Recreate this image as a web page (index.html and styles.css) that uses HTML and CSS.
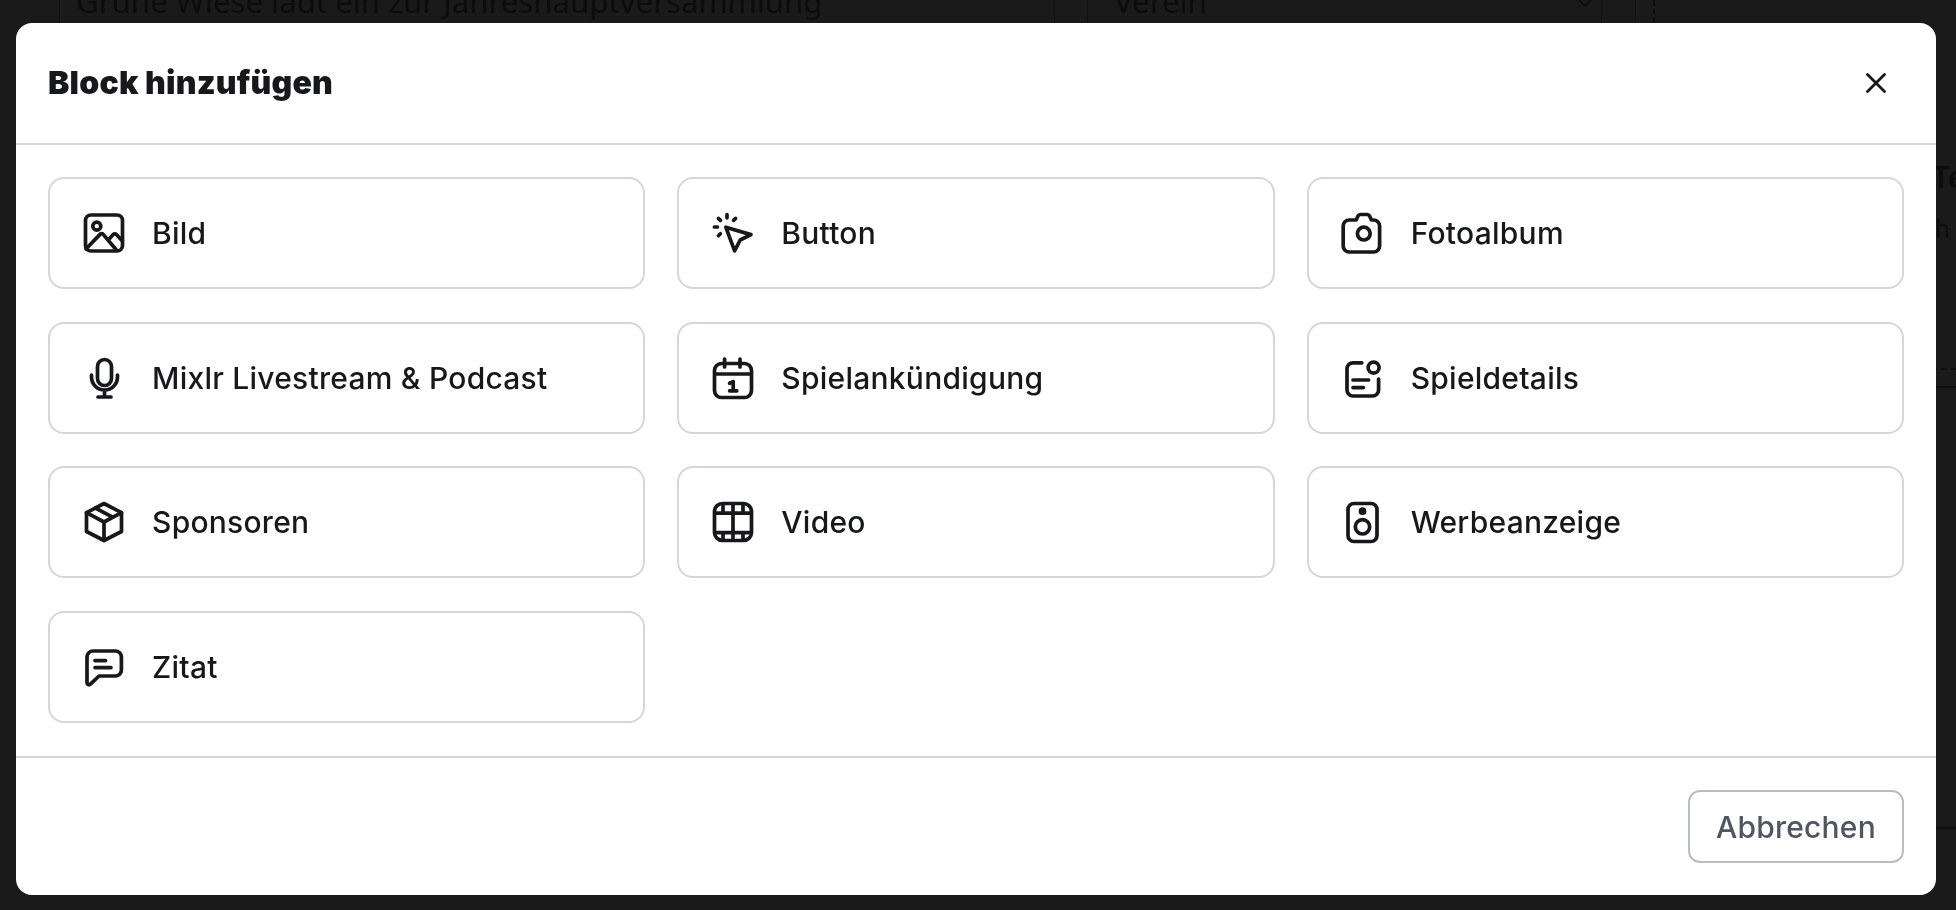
FILE: index.html
```html
<!DOCTYPE html>
<html lang="de">
<head>
<meta charset="utf-8">
<title>Block hinzufügen</title>
<link rel="stylesheet" href="styles.css">
</head>
<body>
<div class="behind">
  <div class="behind-row">
    <div class="cell cell-a"></div>
    <div class="cell cell-b">Grüne Wiese lädt ein zur Jahreshauptversammlung</div>
    <div class="cell cell-c"></div>
    <div class="cell cell-d"><span>Verein</span><svg class="chev" viewBox="0 0 16 10" width="16" height="10"><path d="M1 1l7 7 7-7"/></svg></div>
    <div class="cell cell-e"></div>
    <div class="cell cell-f"></div>
    <div class="cell cell-g">
      <div class="side-title">Te</div>
      <div class="side-text">h</div>
      <div class="side-dash"></div>
      <div class="side-line"></div>
      <div class="side-line side-line-low"></div>
    </div>
  </div>
</div>
<div class="overlay">
  <div class="modal">
    <header class="modal-head">
      <h2 class="modal-title">Block hinzufügen</h2>
      <button class="close" aria-label="Schließen">
        <svg viewBox="0 0 20 20" width="20" height="20"><path d="M1.5 1.5l17 17M18.5 1.5l-17 17"/></svg>
      </button>
    </header>
    <div class="modal-body">
      <div class="block"><svg class="ico" viewBox="0 0 24 24"><rect x="2.75" y="3" width="18.5" height="18" rx="2.75"/><circle cx="8.4" cy="8.6" r="2"/><path d="M3 20l7-7.3a1.1 1.1 0 0 1 1.6 0l6.6 7.8M14 15.6l2.6-2.8a1.1 1.1 0 0 1 1.6 0l3 3.2"/></svg><span class="label">Bild</span></div>
      <div class="block"><svg class="ico" viewBox="0 0 24 24"><path d="M8.4 9.1l12.6 3.7-5.4 2.7-2.8 5.4z"/><path d="M9 2.8v1.6M4.7 4.7l1 1M13.3 4.7l-1 1M2.7 9h1.5M4.7 13.4l1-1"/></svg><span class="label">Button</span></div>
      <div class="block"><svg class="ico" viewBox="0 0 24 24"><path d="M8.6 5.5l.9-2a1.3 1.3 0 0 1 1.2-.75h3.4a1.3 1.3 0 0 1 1.2.75l.9 2h1.1a3 3 0 0 1 3 3v10a3 3 0 0 1-3 3h-12.2a3 3 0 0 1-3-3v-10a3 3 0 0 1 3-3z"/><circle cx="12.4" cy="12.3" r="3.2"/></svg><span class="label">Fotoalbum</span></div>

      <div class="block"><svg class="ico" viewBox="0 0 24 24"><rect x="8.75" y="2.75" width="7" height="13" rx="3.5"/><path d="M5.75 10.5v1a6.5 6.5 0 0 0 13 0v-1M12.25 18v3.5M9 21.5h6.5"/></svg><span class="label">Mixlr Livestream &amp; Podcast</span></div>
      <div class="block"><svg class="ico" viewBox="0 0 24 24"><rect x="2.75" y="4.75" width="18.5" height="17" rx="3.5"/><path d="M7.8 2.5v4M15.5 2.5v4M3 10h18M10.3 14.6l1.8-.8v4.4M10.3 18.4h3.6"/></svg><span class="label">Spielankündigung</span></div>
      <div class="block"><svg class="ico" viewBox="0 0 24 24"><path d="M11.4 4.4H7a3 3 0 0 0-3 3V18a3 3 0 0 0 3 3h9.8a3 3 0 0 0 3-3v-5.5"/><circle cx="17.3" cy="6.8" r="2.75"/><path d="M7 13h7.8M7 16.8h5.2"/></svg><span class="label">Spieldetails</span></div>

      <div class="block"><svg class="ico" viewBox="0 0 24 24"><path d="M12 2.75l8.75 4.6v9.4L12 21.25l-8.75-4.5v-9.4z" /><path d="M3.25 7.35L12 12l8.75-4.65M12 12v9.25M7.7 5l8.6 4.6"/></svg><span class="label">Sponsoren</span></div>
      <div class="block"><svg class="ico" viewBox="0 0 24 24"><rect x="2.75" y="2.75" width="18.5" height="18.5" rx="4"/><path d="M3 7.6h18M3 17.3h18M12 3v18M7 3v4.6M17 3v4.6M7 17.3V21M17 17.3V21"/></svg><span class="label">Video</span></div>
      <div class="block"><svg class="ico" viewBox="0 0 24 24"><rect x="4.5" y="2.75" width="14.5" height="19" rx="3"/><circle cx="11.75" cy="14.4" r="3.6"/><circle class="solid" cx="11.75" cy="6.6" r="1"/></svg><span class="label">Werbeanzeige</span></div>

      <div class="block"><svg class="ico" viewBox="0 0 24 24"><path d="M3.5 7a3 3 0 0 1 3-3h11.2a3 3 0 0 1 3 3v6.5a3 3 0 0 1-3 3H9.5l-4.3 4.1c-.7.6-1.7.2-1.7-.7z"/><path d="M7.5 8.8h5.3M7.5 12.3h8"/></svg><span class="label">Zitat</span></div>
    </div>
    <footer class="modal-foot">
      <button class="cancel">Abbrechen</button>
    </footer>
  </div>
</div>
</body>
</html>
```

FILE: styles.css
```css
* { box-sizing: border-box; }
html, body { margin: 0; height: 100%; overflow: hidden; }
body { background: #1a1a1a; font-family: "Noto Sans", sans-serif; color: #16181b; }

.behind { height: 910px; overflow: hidden; color: #0c0c0c; }
.behind-row { display: grid; grid-template-columns: 59px 995px 33px 514px 34px 18px 303px; height: 910px; margin-top: -19px; }
.cell { font-size: 31.2px; line-height: 40px; }
.cell-b { border-left: 1px solid #111; padding-left: 16px; height: 42px; }
.cell-c { border-left: 1px solid #111; height: 42px; }
.cell-d { border-left: 1px solid #111; padding: 0 8px 0 26px; height: 42px; display: flex; justify-content: space-between; }
.chev { margin-top: 17px; fill: none; stroke: #0c0c0c; stroke-width: 1.5; }
.cell-e { border-left: 1px solid #111; height: 42px; }
.cell-f { border-left: 1px solid #141414; height: 42px; }
.cell-g { padding-left: 279px; }
.cell-g::before { content: ""; display: block; position: absolute; left: 1653px; top: 0; height: 23px; border-left: 2px dashed #0f0f0f; }
.side-title { font-weight: 600; margin-top: 175px; }
.side-text { font-size: 24px; margin-top: 12px; padding-left: 3px; }
.side-dash { border-top: 2px dashed #0f0f0f; margin: 120px 0 0 -20px; }
.side-line { border-top: 2px solid #111; margin: 16px 0 0 -20px; }
.side-line-low { margin-top: 439px; }

.overlay { position: fixed; inset: 0; padding: 23px 20px 15px 16px; display: flex; }
.modal { flex: 1; background: #fff; border-radius: 16px; display: flex; flex-direction: column; overflow: hidden; }

.modal-head { height: 122px; flex: none; display: flex; align-items: center; justify-content: space-between; padding: 0 32px; border-bottom: 2px solid #d4d7da; }
.modal-title { margin: 0; font-family: Inter, sans-serif; font-weight: 900; font-size: 32px; letter-spacing: 0.2px; line-height: 40px; color: #16181b; }
.close { background: none; border: 0; padding: 0; width: 20px; height: 20px; margin-right: 18px; display: block; }
.close svg { display: block; fill: none; stroke: #16181b; stroke-width: 2.8; stroke-linecap: round; }

.modal-body { flex: 1; padding: 32px; display: grid; grid-template-columns: repeat(3, 1fr); grid-auto-rows: 112px; gap: 32.6px 32px; align-content: start; }
.block { display: flex; align-items: center; gap: 24px; padding: 0 30px; border: 2px solid #d4d7da; border-radius: 16px; }
.ico { width: 48px; height: 48px; flex: none; fill: none; stroke: #16181b; stroke-width: 1.85; stroke-linecap: round; stroke-linejoin: round; }
.ico .solid { fill: #16181b; }
.label { font-family: Inter, sans-serif; font-size: 30px; font-weight: 500; letter-spacing: 0.25px; line-height: 36px; color: #16181b; }

.modal-foot { flex: none; height: 139px; padding: 32px; display: flex; justify-content: flex-end; border-top: 2px solid #d4d7da; }
.cancel { width: 216px; height: 73px; background: #fff; border: 2px solid #b8bdc5; border-radius: 12px; font-family: Inter, sans-serif; font-weight: 500; font-size: 30px; letter-spacing: 0.2px; color: #4f5661; padding: 0; }
```
